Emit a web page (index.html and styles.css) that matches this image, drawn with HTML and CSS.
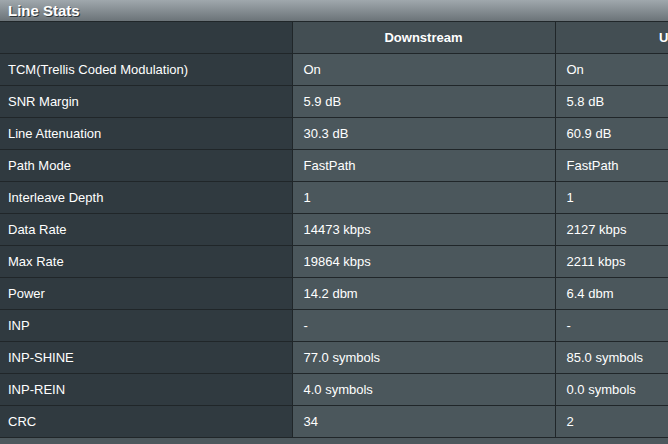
FILE: index.html
```html
<!DOCTYPE html>
<html>
<head>
<meta charset="utf-8">
<link rel="stylesheet" href="styles.css">
</head>
<body>
<div class="panel">
  <div class="title">Line Stats</div>
  <table class="stats">
    <colgroup><col class="c-label"><col class="c-val"><col class="c-val2"></colgroup>
    <thead>
      <tr><th class="label"></th><th>Downstream</th><th>Upstream</th></tr>
    </thead>
    <tbody>
      <tr><td class="label">TCM(Trellis Coded Modulation)</td><td>On</td><td>On</td></tr>
      <tr><td class="label">SNR Margin</td><td>5.9 dB</td><td>5.8 dB</td></tr>
      <tr><td class="label">Line Attenuation</td><td>30.3 dB</td><td>60.9 dB</td></tr>
      <tr><td class="label">Path Mode</td><td>FastPath</td><td>FastPath</td></tr>
      <tr><td class="label">Interleave Depth</td><td>1</td><td>1</td></tr>
      <tr><td class="label">Data Rate</td><td>14473 kbps</td><td>2127 kbps</td></tr>
      <tr><td class="label">Max Rate</td><td>19864 kbps</td><td>2211 kbps</td></tr>
      <tr><td class="label">Power</td><td>14.2 dbm</td><td>6.4 dbm</td></tr>
      <tr><td class="label">INP</td><td>-</td><td>-</td></tr>
      <tr><td class="label">INP-SHINE</td><td>77.0 symbols</td><td>85.0 symbols</td></tr>
      <tr><td class="label">INP-REIN</td><td>4.0 symbols</td><td>0.0 symbols</td></tr>
      <tr><td class="label">CRC</td><td>34</td><td>2</td></tr>
    </tbody>
  </table>
</div>
</body>
</html>
```
FILE: styles.css
```css
html, body {
  margin: 0;
  padding: 0;
  background: #4d585d;
  overflow: hidden;
  width: 668px;
  height: 444px;
}
.panel {
  width: 668px;
  overflow: hidden;
  font-family: "Liberation Sans", Arial, sans-serif;
  color: #fff;
}
.title {
  height: 21px;
  box-sizing: border-box;
  padding: 2px 0 0 8px;
  font-size: 15px;
  font-weight: bold;
  line-height: 17px;
  background: linear-gradient(#a0a8ad, #6b7378);
  text-shadow: 1px 1px 0 #2c3438;
}
.stats {
  border-collapse: collapse;
  table-layout: fixed;
  width: 823px;
  font-size: 13px;
}
.c-label { width: 292px; }
.c-val { width: 263px; }
.c-val2 { width: 268px; }
.stats th, .stats td {
  height: 31px;
  padding: 0 0 0 11px;
  border: 1px solid #202629;
  background: #4b575c;
  text-align: left;
  vertical-align: middle;
  white-space: nowrap;
  overflow: hidden;
}
.stats th {
  background: #434e53;
  text-align: center;
  padding: 0;
  font-weight: bold;
}
.stats .label {
  background: #303a40;
  border-left: none;
  padding-left: 8px;
}
.stats th.label { background: #303a40; }
```
